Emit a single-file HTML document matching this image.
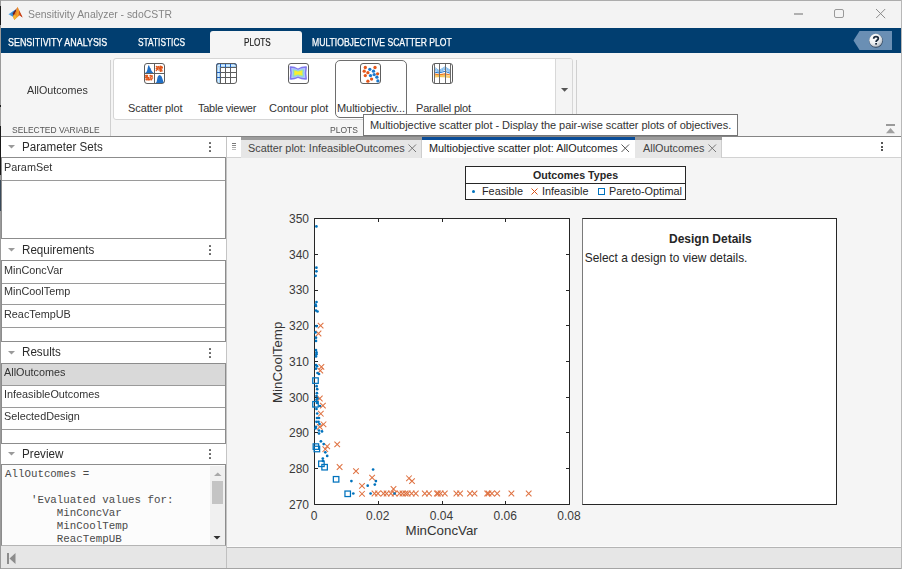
<!DOCTYPE html>
<html><head><meta charset="utf-8">
<style>
*{box-sizing:border-box;margin:0;padding:0}
html,body{width:902px;height:569px;overflow:hidden;background:#f0f0f0;font-family:"Liberation Sans",sans-serif}
.a{position:absolute}
.t{position:absolute;white-space:nowrap;line-height:1}
</style></head><body>
<!-- window frame -->
<div class="a" style="left:0;top:0;width:902px;height:569px;background:#f3f3f3"></div>
<div class="a" style="left:0;top:0;width:902px;height:1px;background:#acacac"></div>
<div class="a" style="left:0;top:0;width:1px;height:569px;background:#9a9a9a"></div>
<div class="a" style="left:901px;top:0;width:1px;height:569px;background:#b8b8b8"></div>
<!-- title bar -->
<svg class="a" style="left:0;top:0" width="30" height="30" viewBox="0 0 30 30">
 <defs><linearGradient id="lgB" x1="0" y1="0" x2="1" y2="0"><stop offset="0" stop-color="#5fb0ec"/><stop offset="1" stop-color="#1c6fc0"/></linearGradient>
 <linearGradient id="lgO" x1="0" y1="0" x2="1" y2="0.3"><stop offset="0" stop-color="#7a1a14"/><stop offset="0.35" stop-color="#e7761e"/><stop offset="0.6" stop-color="#f4a428"/><stop offset="1" stop-color="#c5401a"/></linearGradient></defs>
 <path d="M8.4 14.3 L15.6 9.6 L13.4 16.9 Z" fill="url(#lgB)"/>
 <path d="M12.6 13.6 L16.9 8 L14.6 16.8 Z" fill="#6e1c1a"/>
 <path d="M17.4 6.8 L22.6 17.6 L19.6 15.3 L14.3 19.9 L12.9 15.9 L15.6 12.2 Z" fill="url(#lgO)"/>
 <path d="M17.4 6.8 L22.6 17.6 L19.6 15.3 L18.9 10.5 Z" fill="#c9421b"/>
 <path d="M14.3 19.9 L12.9 15.9 L15.2 14.5 L16.5 17.6 Z" fill="#f2b531"/>
</svg>
<div class="a" style="left:0;top:6px;width:1px;height:19px;background:#1a1a1a"></div>
<div class="a" style="left:0;top:126px;width:1px;height:49px;background:#1a1a1a"></div><div class="a" style="left:0;top:105px;width:1px;height:2px;background:#1a1a1a"></div>
<div class="a" style="left:0;top:180px;width:1px;height:31px;background:#3a4a5a"></div>
<div class="t" style="left:28px;top:9px;font-size:11.5px;color:#858585;transform:scaleX(0.905);transform-origin:0 0">Sensitivity Analyzer - sdoCSTR</div>
<div class="a" style="left:794px;top:13px;width:9px;height:2px;background:#b0b0b0"></div>
<div class="a" style="left:834px;top:9px;width:10px;height:9px;border:1.4px solid #999;border-radius:2px"></div>
<svg class="a" style="left:876px;top:9px" width="10" height="10"><path d="M0 0 L9.2 9.2 M9.2 0 L0 9.2" stroke="#8c8c8c" stroke-width="1"/></svg>
<!-- blue tab bar -->
<div class="a" style="left:1px;top:28px;width:900px;height:25px;background:#013e70"></div>
<div class="t" style="left:8px;top:38px;font-size:10.2px;color:#fff;-webkit-text-stroke:0.25px #fff;transform:scaleX(0.875);transform-origin:0 0">SENSITIVITY ANALYSIS</div>
<div class="t" style="left:138px;top:38px;font-size:10.2px;color:#fff;-webkit-text-stroke:0.25px #fff;transform:scaleX(0.82);transform-origin:0 0">STATISTICS</div>
<div class="a" style="left:210px;top:31px;width:92px;height:22px;background:#f5f5f5;border-radius:3px 3px 0 0"></div>
<div class="t" style="left:244px;top:38px;font-size:10.2px;color:#222;-webkit-text-stroke:0.2px #222;transform:scaleX(0.8);transform-origin:0 0">PLOTS</div>
<div class="t" style="left:312px;top:38px;font-size:10.2px;color:#fff;-webkit-text-stroke:0.25px #fff;transform:scaleX(0.845);transform-origin:0 0">MULTIOBJECTIVE SCATTER PLOT</div>
<svg class="a" style="left:853px;top:31px" width="40" height="20"><defs><radialGradient id="hg" cx="0.35" cy="0.3" r="0.8"><stop offset="0" stop-color="#ffffff"/><stop offset="0.55" stop-color="#eef0f2"/><stop offset="1" stop-color="#a9b2bc"/></radialGradient></defs>
 <path d="M6.5 0 H39 V19 H6.5 L0.5 9.5 Z" fill="#6a8fb4"/>
 <circle cx="23" cy="9.8" r="6.9" fill="#2a3a4e" opacity="0.85"/>
 <circle cx="22.8" cy="9.3" r="6.5" fill="url(#hg)"/>
 <path d="M20.7 7.7 Q20.7 5.6 23 5.6 Q25.3 5.6 25.3 7.5 Q25.3 8.7 24 9.4 Q23.1 9.9 23.1 11" fill="none" stroke="#1c2b3d" stroke-width="1.8"/>
 <rect x="22.2" y="12" width="1.8" height="1.6" fill="#1c2b3d"/></svg>
<!-- toolstrip -->
<div class="a" style="left:1px;top:53px;width:900px;height:83px;background:#f5f5f5"></div>
<div class="t" style="left:26.6px;top:85px;font-size:11px;color:#333;transform:scaleX(0.975);transform-origin:0 0">AllOutcomes</div>
<div class="t" style="left:11.8px;top:124.6px;font-size:9.6px;color:#555;transform:scaleX(0.88);transform-origin:0 0">SELECTED VARIABLE</div>
<div class="a" style="left:110px;top:60px;width:1px;height:76px;background:#d0d0d0"></div>
<div class="a" style="left:113px;top:58px;width:460px;height:62px;background:#fff;border:1px solid #d6d6d6;border-radius:3px"></div>
<div class="a" style="left:556px;top:59px;width:16px;height:60px;background:#f4f4f4;border-radius:0 2px 2px 0"></div>
<div class="a" style="left:555px;top:59px;width:1px;height:60px;background:#d8d8d8"></div>
<svg class="a" style="left:561px;top:88px" width="8" height="5"><path d="M0 0 H7.2 L3.6 3.8 Z" fill="#555"/></svg>
<div class="a" style="left:576px;top:60px;width:1px;height:76px;background:#d0d0d0"></div>
<div class="a" style="left:335px;top:60px;width:72px;height:58px;border:1px solid #6e6e6e;border-radius:5px"></div>
<svg class="a" style="left:144px;top:63px" width="22" height="22" viewBox="0 0 22 22"><rect x="0.5" y="0.5" width="20" height="20" rx="2.5" fill="#fff"/><path d="M1 10 L2.5 9 L3.3 7 L3.8 4.5 L4.3 2.6 L5 2.3 L5.5 3.5 L6 4.8 L6.6 5.2 L7.1 7 L8 8.6 L9.6 10 Z" fill="#1f6fc6"/><circle cx="14.3" cy="3.9" r="0.93" fill="#e0561a"/><circle cx="12.5" cy="5.8" r="0.78" fill="#e0561a"/><circle cx="12.4" cy="5.6" r="0.62" fill="#e0561a"/><circle cx="15.0" cy="3.4" r="0.65" fill="#e0561a"/><circle cx="15.0" cy="7.2" r="0.66" fill="#e0561a"/><circle cx="13.6" cy="6.2" r="1.07" fill="#e0561a"/><circle cx="16.0" cy="5.1" r="1.09" fill="#e0561a"/><circle cx="12.3" cy="7.4" r="0.74" fill="#e0561a"/><circle cx="13.0" cy="3.7" r="0.75" fill="#e0561a"/><circle cx="17.7" cy="4.0" r="0.89" fill="#e0561a"/><circle cx="16.5" cy="5.0" r="0.87" fill="#e0561a"/><circle cx="12.4" cy="3.4" r="0.70" fill="#e0561a"/><circle cx="16.8" cy="5.2" r="0.76" fill="#e0561a"/><circle cx="16.1" cy="5.4" r="0.75" fill="#e0561a"/><circle cx="17.6" cy="6.6" r="0.72" fill="#e0561a"/><circle cx="16.0" cy="5.7" r="1.04" fill="#e0561a"/><circle cx="17.1" cy="4.5" r="1.09" fill="#e0561a"/><circle cx="12.8" cy="5.2" r="0.98" fill="#e0561a"/><circle cx="13.1" cy="5.5" r="0.62" fill="#e0561a"/><circle cx="16.7" cy="6.9" r="0.89" fill="#e0561a"/><circle cx="18.1" cy="4.7" r="0.95" fill="#e0561a"/><circle cx="16.2" cy="6.0" r="0.83" fill="#e0561a"/><circle cx="17.9" cy="7.8" r="0.84" fill="#e0561a"/><circle cx="16.6" cy="3.4" r="0.95" fill="#e0561a"/><circle cx="16.5" cy="8.1" r="1.01" fill="#e0561a"/><circle cx="14.0" cy="5.0" r="0.93" fill="#e0561a"/><circle cx="1.6" cy="14.6" r="0.68" fill="#e0561a"/><circle cx="2.3" cy="12.8" r="0.98" fill="#e0561a"/><circle cx="2.4" cy="13.6" r="0.80" fill="#e0561a"/><circle cx="8.0" cy="12.9" r="0.82" fill="#e0561a"/><circle cx="5.6" cy="16.6" r="1.01" fill="#e0561a"/><circle cx="7.9" cy="13.8" r="0.81" fill="#e0561a"/><circle cx="4.1" cy="16.6" r="1.08" fill="#e0561a"/><circle cx="2.6" cy="13.3" r="0.72" fill="#e0561a"/><circle cx="3.2" cy="14.7" r="0.89" fill="#e0561a"/><circle cx="3.4" cy="12.5" r="0.81" fill="#e0561a"/><circle cx="4.2" cy="15.1" r="1.08" fill="#e0561a"/><circle cx="6.6" cy="14.9" r="0.91" fill="#e0561a"/><circle cx="6.5" cy="12.7" r="1.05" fill="#e0561a"/><circle cx="7.3" cy="16.5" r="1.00" fill="#e0561a"/><circle cx="4.4" cy="14.3" r="0.65" fill="#e0561a"/><circle cx="6.2" cy="12.8" r="0.63" fill="#e0561a"/><circle cx="3.0" cy="13.2" r="0.77" fill="#e0561a"/><circle cx="1.8" cy="12.5" r="0.68" fill="#e0561a"/><circle cx="2.2" cy="14.2" r="0.61" fill="#e0561a"/><circle cx="8.0" cy="15.3" r="0.67" fill="#e0561a"/><circle cx="3.3" cy="14.1" r="0.78" fill="#e0561a"/><circle cx="2.4" cy="16.4" r="1.10" fill="#e0561a"/><circle cx="4.9" cy="14.7" r="0.64" fill="#e0561a"/><circle cx="2.2" cy="14.1" r="0.73" fill="#e0561a"/><circle cx="7.7" cy="13.2" r="0.61" fill="#e0561a"/><circle cx="8.6" cy="14.9" r="0.67" fill="#e0561a"/><path d="M11.5 20 L12.6 19 L13.2 16 L13.6 14 L14.6 12.6 L15.6 12 L16.6 12.6 L17.6 13.4 L18.6 16.2 L19.3 18.4 L20 20 Z" fill="#1f6fc6"/><path d="M10.5 1 V20.5 M0.5 10.5 H20.5" stroke="#5e5e5e" stroke-width="1"/><rect x="0.5" y="0.5" width="20" height="20" rx="2.5" fill="none" stroke="#5e5e5e" stroke-width="1"/></svg><svg class="a" style="left:216px;top:63px" width="22" height="22" viewBox="0 0 22 22"><defs><linearGradient id="thg" x1="0" y1="0" x2="0" y2="1"><stop offset="0" stop-color="#6aaaf0"/><stop offset="0.5" stop-color="#d6f0ff"/><stop offset="1" stop-color="#7ab6f0"/></linearGradient><linearGradient id="tvg" x1="0" y1="0" x2="1" y2="0"><stop offset="0" stop-color="#6aaaf0"/><stop offset="0.5" stop-color="#d6f0ff"/><stop offset="1" stop-color="#7ab6f0"/></linearGradient></defs><rect x="0.5" y="0.5" width="20" height="20" rx="2.5" fill="#fff"/><path d="M0.5 3 Q0.5 0.5 3 0.5 H18 Q20.5 0.5 20.5 3 V4.5 H0.5 Z" fill="url(#thg)"/><path d="M0.5 4.5 H4.5 V20.5 H3 Q0.5 20.5 0.5 18 Z" fill="url(#tvg)"/><path d="M9.5 4.5 V20.5 M14.5 4.5 V20.5 M4.5 9.5 H20.5 M4.5 14.5 H20.5 M4.5 4.5 H20.5 M4.5 4.5 V20.5" stroke="#5e5e5e" stroke-width="1"/><path d="M4.5 0.5 V4.5 M9.5 0.5 V4.5 M14.5 0.5 V4.5 M0.5 9.5 H4.5 M0.5 14.5 H4.5" stroke="#1f5fbf" stroke-width="1"/><path d="M0.5 18 V3 Q0.5 0.5 3 0.5 H18 Q20.5 0.5 20.5 3 V4.5" fill="none" stroke="#1f5fbf" stroke-width="1.1"/><rect x="0.5" y="0.5" width="20" height="20" rx="2.5" fill="none" stroke="#5e5e5e" stroke-width="1"/></svg><svg class="a" style="left:288px;top:63px" width="22" height="22" viewBox="0 0 22 22"><defs><filter id="cblur" x="-20%" y="-20%" width="140%" height="140%"><feGaussianBlur stdDeviation="0.55"/></filter></defs><rect x="0.5" y="0.5" width="20" height="20" rx="2.5" fill="#fff"/><g filter="url(#cblur)"><path d="M1.6 3.4 Q6 3 10 5.5 Q14 3 19 3.4 Q17.6 10 19 16.6 Q14 17 10 15 Q6 17 1.6 16.6 Q3 10 1.6 3.4 Z" fill="#8078ee"/><path d="M3.2 5 Q7 4.6 10 6.8 Q13 4.6 17.4 5 Q16.2 10 17.4 15 Q13 15.4 10 13.6 Q7 15.4 3.2 15 Q4.4 10 3.2 5 Z" fill="#b4c8f8"/><path d="M4.6 6.4 Q8 6.2 10 7.8 Q12 6.2 16 6.4 Q15 10 16 13.6 Q12 13.8 10 12.4 Q8 13.8 4.6 13.6 Q5.6 10 4.6 6.4 Z" fill="#7fd6e0"/><path d="M5.6 7.3 Q8.5 7.1 10 8.4 Q11.5 7.1 15 7.3 Q14.2 10 15 12.6 Q11.5 12.8 10 11.7 Q8.5 12.8 5.6 12.6 Q6.4 10 5.6 7.3 Z" fill="#c8ec70"/><path d="M6.6 8.1 Q9 8 10 9 Q11 8 14 8.1 Q13.4 10 14 11.9 Q11 12 10 11.1 Q9 12 6.6 11.9 Q7.2 10 6.6 8.1 Z" fill="#fbee2e"/></g><rect x="0.5" y="0.5" width="20" height="20" rx="2.5" fill="none" stroke="#5e5e5e" stroke-width="1"/></svg><svg class="a" style="left:360px;top:63px" width="22" height="22" viewBox="0 0 22 22"><rect x="1" y="1" width="20" height="20" rx="2.5" fill="#fff"/><circle cx="5.3" cy="4.5" r="1.65" fill="#e4571b"/><circle cx="15.0" cy="4.5" r="1.65" fill="#e4571b"/><circle cx="4.2" cy="8.2" r="1.65" fill="#e4571b"/><circle cx="7.9" cy="9.7" r="1.65" fill="#e4571b"/><circle cx="5.3" cy="12.6" r="1.65" fill="#e4571b"/><circle cx="17.6" cy="10.8" r="1.65" fill="#e4571b"/><circle cx="11.6" cy="16.1" r="1.65" fill="#e4571b"/><circle cx="7.9" cy="18.2" r="1.65" fill="#e4571b"/><circle cx="9.8" cy="6.3" r="1.65" fill="#1d78cc"/><circle cx="13.5" cy="8.2" r="1.65" fill="#1d78cc"/><circle cx="10.5" cy="12.6" r="1.65" fill="#1d78cc"/><circle cx="14.2" cy="11.6" r="1.65" fill="#1d78cc"/><circle cx="16.9" cy="14.2" r="1.65" fill="#1d78cc"/><circle cx="17.9" cy="17.9" r="1.65" fill="#1d78cc"/><rect x="0.5" y="0.5" width="20" height="20" rx="2.5" fill="none" stroke="#5e5e5e" stroke-width="1"/></svg><svg class="a" style="left:432px;top:63px" width="22" height="22" viewBox="0 0 22 22"><rect x="0.5" y="0.5" width="20" height="20" rx="2.5" fill="#fff"/><path d="M2 4 L7 7.5 L13 3.8 L18.7 7.5 M2 5.5 L7 8.5 L13 5 L18.7 8.5 M2 7 L7 9.3 L13 6.3 L18.7 9.5" stroke="#5aa6e8" stroke-width="0.8" fill="none"/><path d="M2 9 L7 10 L13 8.3 L18.7 10.5" stroke="#1f74cc" stroke-width="1" fill="none"/><path d="M2 10.8 L7 11.8 L13 10.8 L18.7 12" stroke="#ee7a22" stroke-width="1.2" fill="none"/><path d="M2 12.6 L7 12.8 L13 12.6 L18.7 13.4 M2 14 L7 13.6 L13 13.8 L18.7 14.4" stroke="#f4b428" stroke-width="0.9" fill="none"/><path d="M2.5 1 V20 M7.5 1 V20 M13.5 1 V20 M18.5 1 V20" stroke="#6b6b6b" stroke-width="1"/><rect x="0.5" y="0.5" width="20" height="20" rx="2.5" fill="none" stroke="#5e5e5e" stroke-width="1"/></svg>
<div class="t" style="left:128px;top:103px;font-size:11px;color:#333;letter-spacing:-0.1px">Scatter plot</div>
<div class="t" style="left:198px;top:103px;font-size:11px;color:#333;letter-spacing:-0.25px">Table viewer</div>
<div class="t" style="left:269px;top:103px;font-size:11px;color:#333;letter-spacing:-0.05px">Contour plot</div>
<div class="t" style="left:337px;top:103px;font-size:11px;color:#333;letter-spacing:-0.05px">Multiobjectiv...</div>
<div class="t" style="left:416px;top:103px;font-size:11px;color:#333;letter-spacing:-0.2px">Parallel plot</div>
<div class="t" style="left:330px;top:124.5px;font-size:9.8px;color:#555;transform:scaleX(0.87);transform-origin:0 0">PLOTS</div>
<svg class="a" style="left:885px;top:123px" width="11" height="11"><rect x="1" y="1" width="9" height="2" fill="#9a9a9a"/><path d="M1 10.3 L5.5 5 L10 10.3 Z" fill="#a0a0a0"/></svg>
<div class="a" style="left:1px;top:136px;width:900px;height:1px;background:#858585"></div>
<!-- left panel -->
<div class="a" style="left:1px;top:137px;width:225px;height:410px;background:#f0f0f0"></div>
<div class="a" style="left:1px;top:137px;width:225px;height:20px;background:#fff"></div>
<div class="a" style="left:1px;top:157px;width:225px;height:1px;background:#8c8c8c"></div>
<svg class="a" style="left:8px;top:145px" width="8" height="5"><path d="M0 0 H7 L3.5 3.6 Z" fill="#9a9a9a"/></svg>
<div class="t" style="left:22px;top:141.4px;font-size:12.5px;color:#2b2b2b;transform:scaleX(0.93);transform-origin:0 0">Parameter Sets</div>
<div class="a" style="left:209px;top:142.3px;width:2px;height:2px;background:#666;border-radius:0.5px"></div>
<div class="a" style="left:209px;top:146.0px;width:2px;height:2px;background:#666;border-radius:0.5px"></div>
<div class="a" style="left:209px;top:149.6px;width:2px;height:2px;background:#666;border-radius:0.5px"></div>
<div class="a" style="left:1px;top:158px;width:225px;height:81px;background:#fff;border-left:1px solid #8c8c8c;border-right:1px solid #8c8c8c;border-bottom:1px solid #8c8c8c"></div>
<div class="t" style="left:4.3px;top:162.4px;font-size:11px;color:#333;transform:scaleX(0.985);transform-origin:0 0">ParamSet</div>
<div class="a" style="left:2px;top:180px;width:223px;height:1px;background:#9a9a9a"></div>
<div class="a" style="left:1px;top:239px;width:225px;height:21px;background:#fff"></div>
<div class="a" style="left:1px;top:260px;width:225px;height:1px;background:#8c8c8c"></div>
<svg class="a" style="left:8px;top:248px" width="8" height="5"><path d="M0 0 H7 L3.5 3.6 Z" fill="#9a9a9a"/></svg>
<div class="t" style="left:22px;top:244.1px;font-size:12.5px;color:#2b2b2b;transform:scaleX(0.93);transform-origin:0 0">Requirements</div>
<div class="a" style="left:209px;top:245.3px;width:2px;height:2px;background:#666;border-radius:0.5px"></div>
<div class="a" style="left:209px;top:249.0px;width:2px;height:2px;background:#666;border-radius:0.5px"></div>
<div class="a" style="left:209px;top:252.6px;width:2px;height:2px;background:#666;border-radius:0.5px"></div>
<div class="a" style="left:1px;top:261px;width:225px;height:81px;background:#fff;border-left:1px solid #8c8c8c;border-right:1px solid #8c8c8c;border-bottom:1px solid #8c8c8c"></div>
<div class="t" style="left:4.3px;top:265.4px;font-size:11px;color:#333;transform:scaleX(0.985);transform-origin:0 0">MinConcVar</div>
<div class="a" style="left:2px;top:283px;width:223px;height:1px;background:#9a9a9a"></div>
<div class="t" style="left:4.3px;top:286.4px;font-size:11px;color:#333;transform:scaleX(0.985);transform-origin:0 0">MinCoolTemp</div>
<div class="a" style="left:2px;top:304px;width:223px;height:1px;background:#9a9a9a"></div>
<div class="t" style="left:4.3px;top:309.4px;font-size:11px;color:#333;transform:scaleX(0.985);transform-origin:0 0">ReacTempUB</div>
<div class="a" style="left:2px;top:327px;width:223px;height:1px;background:#9a9a9a"></div>
<div class="a" style="left:1px;top:342px;width:225px;height:21px;background:#fff"></div>
<div class="a" style="left:1px;top:363px;width:225px;height:1px;background:#8c8c8c"></div>
<svg class="a" style="left:8px;top:351px" width="8" height="5"><path d="M0 0 H7 L3.5 3.6 Z" fill="#9a9a9a"/></svg>
<div class="t" style="left:22px;top:346.2px;font-size:12.5px;color:#2b2b2b;transform:scaleX(0.93);transform-origin:0 0">Results</div>
<div class="a" style="left:209px;top:348.3px;width:2px;height:2px;background:#666;border-radius:0.5px"></div>
<div class="a" style="left:209px;top:351.9px;width:2px;height:2px;background:#666;border-radius:0.5px"></div>
<div class="a" style="left:209px;top:355.6px;width:2px;height:2px;background:#666;border-radius:0.5px"></div>
<div class="a" style="left:1px;top:364px;width:225px;height:80px;background:#fff;border-left:1px solid #8c8c8c;border-right:1px solid #8c8c8c;border-bottom:1px solid #8c8c8c"></div>
<div class="a" style="left:2px;top:364px;width:223px;height:21px;background:#d9d9d9"></div>
<div class="t" style="left:4.3px;top:367.4px;font-size:11px;color:#333;transform:scaleX(0.985);transform-origin:0 0">AllOutcomes</div>
<div class="a" style="left:2px;top:385px;width:223px;height:1px;background:#9a9a9a"></div>
<div class="t" style="left:4.3px;top:389.4px;font-size:11px;color:#333;transform:scaleX(0.985);transform-origin:0 0">InfeasibleOutcomes</div>
<div class="a" style="left:2px;top:407px;width:223px;height:1px;background:#9a9a9a"></div>
<div class="t" style="left:4.3px;top:411.4px;font-size:11px;color:#333;transform:scaleX(0.985);transform-origin:0 0">SelectedDesign</div>
<div class="a" style="left:2px;top:429px;width:223px;height:1px;background:#9a9a9a"></div>
<div class="a" style="left:1px;top:444px;width:225px;height:20px;background:#fff"></div>
<div class="a" style="left:1px;top:464px;width:225px;height:1px;background:#8c8c8c"></div>
<svg class="a" style="left:8px;top:452px" width="8" height="5"><path d="M0 0 H7 L3.5 3.6 Z" fill="#9a9a9a"/></svg>
<div class="t" style="left:22px;top:448.0px;font-size:12.5px;color:#2b2b2b;transform:scaleX(0.93);transform-origin:0 0">Preview</div>
<div class="a" style="left:209px;top:449.3px;width:2px;height:2px;background:#666;border-radius:0.5px"></div>
<div class="a" style="left:209px;top:452.9px;width:2px;height:2px;background:#666;border-radius:0.5px"></div>
<div class="a" style="left:209px;top:456.6px;width:2px;height:2px;background:#666;border-radius:0.5px"></div>
<div class="a" style="left:1px;top:464px;width:225px;height:82px;background:#fcfcfc;border:1px solid #8c8c8c;border-bottom-color:#b4b4b4"></div>
<div class="a" style="left:210px;top:466px;width:15px;height:79px;background:#f0f0f0"></div>
<div class="a" style="left:212px;top:481px;width:11px;height:23px;background:#c4c4c4"></div>
<svg class="a" style="left:213.5px;top:471.5px" width="8" height="5"><path d="M0 4 H7.5 L3.75 0.4 Z" fill="#a8a8a8"/></svg>
<svg class="a" style="left:213px;top:536px" width="8" height="5"><path d="M0.5 0 H7.5 L4 3.6 Z" fill="#303030"/></svg>
<div class="t" style="left:5px;top:469.2px;font-family:'Liberation Mono',monospace;font-size:10.8px;color:#4a4a4a;white-space:pre">AllOutcomes =</div>
<div class="t" style="left:5px;top:494.9px;font-family:'Liberation Mono',monospace;font-size:10.8px;color:#4a4a4a;white-space:pre">    'Evaluated values for:</div>
<div class="t" style="left:5px;top:507.8px;font-family:'Liberation Mono',monospace;font-size:10.8px;color:#4a4a4a;white-space:pre">        MinConcVar</div>
<div class="t" style="left:5px;top:520.6px;font-family:'Liberation Mono',monospace;font-size:10.8px;color:#4a4a4a;white-space:pre">        MinCoolTemp</div>
<div class="t" style="left:5px;top:533.5px;font-family:'Liberation Mono',monospace;font-size:10.8px;color:#4a4a4a;white-space:pre">        ReacTempUB</div>
<!-- doc tab bar -->
<div class="a" style="left:226px;top:137px;width:675px;height:21px;background:#fff"></div>
<div class="a" style="left:226px;top:157px;width:675px;height:1px;background:#d2d2d2"></div>
<div class="a" style="left:226px;top:137px;width:1px;height:410px;background:#c4c4c4"></div>
<div class="a" style="left:232px;top:143px;width:4px;height:1px;background:#777"></div>
<div class="a" style="left:232px;top:145px;width:4px;height:1px;background:#888"></div>
<div class="a" style="left:232px;top:147px;width:4px;height:1px;background:#aaa"></div>
<div class="a" style="left:232px;top:149px;width:4px;height:1px;background:#bbb"></div>
<div class="a" style="left:241px;top:137px;width:181px;height:21px;background:#e6e6e6;border-right:1px solid #cdcdcd"></div>
<div class="a" style="left:241px;top:137px;width:181px;height:3px;background:#9c9c9c"></div>
<div class="t" style="left:248px;top:143px;font-size:10.85px;color:#444">Scatter plot: InfeasibleOutcomes</div>
<svg class="a" style="left:408px;top:144px" width="9" height="9"><path d="M0.5 0.5 L8 8 M8 0.5 L0.5 8" stroke="#777" stroke-width="1"/></svg>
<div class="a" style="left:422px;top:137px;width:213px;height:21px;background:#fff"></div>
<div class="a" style="left:422px;top:137px;width:213px;height:3px;background:#0a4d99"></div>
<div class="t" style="left:429px;top:143px;font-size:10.85px;color:#222">Multiobjective scatter plot: AllOutcomes</div>
<svg class="a" style="left:621px;top:144px" width="9" height="9"><path d="M0.5 0.5 L8 8 M8 0.5 L0.5 8" stroke="#555" stroke-width="1"/></svg>
<div class="a" style="left:635px;top:137px;width:87px;height:21px;background:#e6e6e6;border-right:1px solid #cdcdcd"></div>
<div class="a" style="left:635px;top:137px;width:87px;height:3px;background:#9c9c9c"></div>
<div class="t" style="left:643px;top:143px;font-size:10.85px;color:#444">AllOutcomes</div>
<svg class="a" style="left:708px;top:144px" width="9" height="9"><path d="M0.5 0.5 L8 8 M8 0.5 L0.5 8" stroke="#777" stroke-width="1"/></svg>
<div class="a" style="left:881px;top:142.2px;width:2px;height:2px;background:#555"></div>
<div class="a" style="left:881px;top:145.8px;width:2px;height:2px;background:#555"></div>
<div class="a" style="left:881px;top:149.4px;width:2px;height:2px;background:#555"></div>
<!-- doc area -->
<div class="a" style="left:227px;top:158px;width:674px;height:389px;background:#f5f5f5"></div>
<!-- legend -->
<div class="a" style="left:465px;top:166px;width:221px;height:34px;background:#fff;border:1px solid #262626"></div>
<div class="a" style="left:466px;top:183px;width:219px;height:1px;background:#262626"></div>
<div class="t" style="left:533px;top:170px;font-size:10.67px;font-weight:700;color:#262626">Outcomes Types</div>
<div class="a" style="left:472.3px;top:189.8px;width:3px;height:3px;border-radius:50%;background:#0072bd"></div>
<div class="t" style="left:482px;top:186px;font-size:10.85px;color:#262626">Feasible</div>
<svg class="a" style="left:531px;top:188px" width="7" height="7"><path d="M0.5 0.5 L6.5 6.5 M6.5 0.5 L0.5 6.5" stroke="#d95319" stroke-width="1"/></svg>
<div class="t" style="left:542px;top:186px;font-size:10.85px;color:#262626">Infeasible</div>
<div class="a" style="left:598px;top:188px;width:7px;height:7px;border:1.3px solid #0072bd"></div>
<div class="t" style="left:609px;top:186px;font-size:10.85px;color:#262626">Pareto-Optimal</div>
<!-- design panel -->
<div class="a" style="left:582px;top:218px;width:255px;height:287px;background:#fff;border:1px solid #262626;border-left-color:#7a7a7a"></div>
<div class="t" style="left:669px;top:233.2px;font-size:12px;font-weight:700;color:#262626">Design Details</div>
<div class="t" style="left:584.8px;top:253px;font-size:11.9px;color:#262626">Select a design to view details.</div>
<svg class="a" style="left:0;top:0" width="902" height="569">
<rect x="314" y="218" width="256" height="287" fill="#fff"/>
<path d="M314.5 218.5 H569.5 V504.5 H314.5 Z" fill="none" stroke="#262626" stroke-width="1"/>
<path d="M314.5 218.5 H318 M569.5 218.5 H566 M314.5 254.5 H318 M569.5 254.5 H566 M314.5 290.5 H318 M569.5 290.5 H566 M314.5 325.5 H318 M569.5 325.5 H566 M314.5 361.5 H318 M569.5 361.5 H566 M314.5 397.5 H318 M569.5 397.5 H566 M314.5 432.5 H318 M569.5 432.5 H566 M314.5 468.5 H318 M569.5 468.5 H566 M314.5 504.5 H318 M569.5 504.5 H566 M314.5 504.5 V501 M314.5 218.5 V222 M378.5 504.5 V501 M378.5 218.5 V222 M442.5 504.5 V501 M442.5 218.5 V222 M505.5 504.5 V501 M505.5 218.5 V222 M569.5 504.5 V501 M569.5 218.5 V222 " stroke="#262626" stroke-width="1" fill="none"/>
<path d="M317.80 322.80 L323.40 328.40 M323.40 322.80 L317.80 328.40" stroke="#df7343" stroke-width="1.05"/>
<path d="M315.70 330.70 L321.30 336.30 M321.30 330.70 L315.70 336.30" stroke="#df7343" stroke-width="1.05"/>
<path d="M318.60 364.10 L324.20 369.70 M324.20 364.10 L318.60 369.70" stroke="#df7343" stroke-width="1.05"/>
<path d="M317.50 367.80 L323.10 373.40 M323.10 367.80 L317.50 373.40" stroke="#df7343" stroke-width="1.05"/>
<path d="M317.00 395.70 L322.60 401.30 M322.60 395.70 L317.00 401.30" stroke="#df7343" stroke-width="1.05"/>
<path d="M320.10 402.80 L325.70 408.40 M325.70 402.80 L320.10 408.40" stroke="#df7343" stroke-width="1.05"/>
<path d="M318.00 410.90 L323.60 416.50 M323.60 410.90 L318.00 416.50" stroke="#df7343" stroke-width="1.05"/>
<path d="M320.70 421.50 L326.30 427.10 M326.30 421.50 L320.70 427.10" stroke="#df7343" stroke-width="1.05"/>
<path d="M317.00 424.10 L322.60 429.70 M322.60 424.10 L317.00 429.70" stroke="#df7343" stroke-width="1.05"/>
<path d="M324.40 443.50 L330.00 449.10 M330.00 443.50 L324.40 449.10" stroke="#df7343" stroke-width="1.05"/>
<path d="M322.50 446.40 L328.10 452.00 M328.10 446.40 L322.50 452.00" stroke="#df7343" stroke-width="1.05"/>
<path d="M334.40 441.60 L340.00 447.20 M340.00 441.60 L334.40 447.20" stroke="#df7343" stroke-width="1.05"/>
<path d="M336.80 464.20 L342.40 469.80 M342.40 464.20 L336.80 469.80" stroke="#df7343" stroke-width="1.05"/>
<path d="M353.20 468.30 L358.80 473.90 M358.80 468.30 L353.20 473.90" stroke="#df7343" stroke-width="1.05"/>
<path d="M359.20 483.10 L364.80 488.70 M364.80 483.10 L359.20 488.70" stroke="#df7343" stroke-width="1.05"/>
<path d="M359.20 491.00 L364.80 496.60 M364.80 491.00 L359.20 496.60" stroke="#df7343" stroke-width="1.05"/>
<path d="M369.30 474.80 L374.90 480.40 M374.90 474.80 L369.30 480.40" stroke="#df7343" stroke-width="1.05"/>
<path d="M390.70 486.20 L396.30 491.80 M396.30 486.20 L390.70 491.80" stroke="#df7343" stroke-width="1.05"/>
<path d="M406.20 475.50 L411.80 481.10 M411.80 475.50 L406.20 481.10" stroke="#df7343" stroke-width="1.05"/>
<path d="M409.20 478.30 L414.80 483.90 M414.80 478.30 L409.20 483.90" stroke="#df7343" stroke-width="1.05"/>
<path d="M371.70 490.70 L377.30 496.30 M377.30 490.70 L371.70 496.30" stroke="#df7343" stroke-width="1.05"/>
<path d="M375.20 490.70 L380.80 496.30 M380.80 490.70 L375.20 496.30" stroke="#df7343" stroke-width="1.05"/>
<path d="M380.70 490.70 L386.30 496.30 M386.30 490.70 L380.70 496.30" stroke="#df7343" stroke-width="1.05"/>
<path d="M383.80 490.70 L389.40 496.30 M389.40 490.70 L383.80 496.30" stroke="#df7343" stroke-width="1.05"/>
<path d="M388.10 490.70 L393.70 496.30 M393.70 490.70 L388.10 496.30" stroke="#df7343" stroke-width="1.05"/>
<path d="M391.80 490.70 L397.40 496.30 M397.40 490.70 L391.80 496.30" stroke="#df7343" stroke-width="1.05"/>
<path d="M396.70 490.70 L402.30 496.30 M402.30 490.70 L396.70 496.30" stroke="#df7343" stroke-width="1.05"/>
<path d="M399.70 490.70 L405.30 496.30 M405.30 490.70 L399.70 496.30" stroke="#df7343" stroke-width="1.05"/>
<path d="M402.70 490.70 L408.30 496.30 M408.30 490.70 L402.70 496.30" stroke="#df7343" stroke-width="1.05"/>
<path d="M404.90 490.70 L410.50 496.30 M410.50 490.70 L404.90 496.30" stroke="#df7343" stroke-width="1.05"/>
<path d="M408.80 490.70 L414.40 496.30 M414.40 490.70 L408.80 496.30" stroke="#df7343" stroke-width="1.05"/>
<path d="M413.00 490.70 L418.60 496.30 M418.60 490.70 L413.00 496.30" stroke="#df7343" stroke-width="1.05"/>
<path d="M422.00 490.70 L427.60 496.30 M427.60 490.70 L422.00 496.30" stroke="#df7343" stroke-width="1.05"/>
<path d="M426.20 490.70 L431.80 496.30 M431.80 490.70 L426.20 496.30" stroke="#df7343" stroke-width="1.05"/>
<path d="M434.10 490.70 L439.70 496.30 M439.70 490.70 L434.10 496.30" stroke="#df7343" stroke-width="1.05"/>
<path d="M435.20 490.70 L440.80 496.30 M440.80 490.70 L435.20 496.30" stroke="#df7343" stroke-width="1.05"/>
<path d="M437.80 490.70 L443.40 496.30 M443.40 490.70 L437.80 496.30" stroke="#df7343" stroke-width="1.05"/>
<path d="M442.00 490.70 L447.60 496.30 M447.60 490.70 L442.00 496.30" stroke="#df7343" stroke-width="1.05"/>
<path d="M453.60 490.70 L459.20 496.30 M459.20 490.70 L453.60 496.30" stroke="#df7343" stroke-width="1.05"/>
<path d="M457.30 490.70 L462.90 496.30 M462.90 490.70 L457.30 496.30" stroke="#df7343" stroke-width="1.05"/>
<path d="M467.20 490.70 L472.80 496.30 M472.80 490.70 L467.20 496.30" stroke="#df7343" stroke-width="1.05"/>
<path d="M471.70 490.70 L477.30 496.30 M477.30 490.70 L471.70 496.30" stroke="#df7343" stroke-width="1.05"/>
<path d="M484.40 490.70 L490.00 496.30 M490.00 490.70 L484.40 496.30" stroke="#df7343" stroke-width="1.05"/>
<path d="M485.70 490.70 L491.30 496.30 M491.30 490.70 L485.70 496.30" stroke="#df7343" stroke-width="1.05"/>
<path d="M489.10 490.70 L494.70 496.30 M494.70 490.70 L489.10 496.30" stroke="#df7343" stroke-width="1.05"/>
<path d="M494.40 490.70 L500.00 496.30 M500.00 490.70 L494.40 496.30" stroke="#df7343" stroke-width="1.05"/>
<path d="M508.60 490.70 L514.20 496.30 M514.20 490.70 L508.60 496.30" stroke="#df7343" stroke-width="1.05"/>
<path d="M525.90 490.70 L531.50 496.30 M531.50 490.70 L525.90 496.30" stroke="#df7343" stroke-width="1.05"/>
<circle cx="316.4" cy="226.4" r="1.35" fill="#0072bd"/>
<circle cx="316.4" cy="267.7" r="1.35" fill="#0072bd"/>
<circle cx="316.4" cy="271.3" r="1.35" fill="#0072bd"/>
<circle cx="315.6" cy="275.8" r="1.35" fill="#0072bd"/>
<circle cx="316.5" cy="302" r="1.35" fill="#0072bd"/>
<circle cx="315.6" cy="304.5" r="1.35" fill="#0072bd"/>
<circle cx="316" cy="306" r="1.35" fill="#0072bd"/>
<circle cx="316" cy="310.5" r="1.35" fill="#0072bd"/>
<circle cx="317.5" cy="311.5" r="1.35" fill="#0072bd"/>
<circle cx="316.5" cy="326.2" r="1.35" fill="#0072bd"/>
<circle cx="315.5" cy="332.4" r="1.35" fill="#0072bd"/>
<circle cx="316" cy="337.7" r="1.35" fill="#0072bd"/>
<circle cx="316" cy="340.9" r="1.35" fill="#0072bd"/>
<circle cx="316" cy="350" r="1.35" fill="#0072bd"/>
<circle cx="316.5" cy="352.4" r="1.35" fill="#0072bd"/>
<circle cx="316.5" cy="354.2" r="1.35" fill="#0072bd"/>
<circle cx="316" cy="356.4" r="1.35" fill="#0072bd"/>
<circle cx="316" cy="365" r="1.35" fill="#0072bd"/>
<circle cx="317" cy="366.2" r="1.35" fill="#0072bd"/>
<circle cx="316" cy="368.7" r="1.35" fill="#0072bd"/>
<circle cx="317.5" cy="373" r="1.35" fill="#0072bd"/>
<circle cx="319" cy="374" r="1.35" fill="#0072bd"/>
<circle cx="316.6" cy="386.2" r="1.35" fill="#0072bd"/>
<circle cx="317.2" cy="389.2" r="1.35" fill="#0072bd"/>
<circle cx="316.9" cy="393.2" r="1.35" fill="#0072bd"/>
<circle cx="316.5" cy="396" r="1.35" fill="#0072bd"/>
<circle cx="317.5" cy="398.5" r="1.35" fill="#0072bd"/>
<circle cx="316.5" cy="399.7" r="1.35" fill="#0072bd"/>
<circle cx="317" cy="403" r="1.35" fill="#0072bd"/>
<circle cx="320" cy="406" r="1.35" fill="#0072bd"/>
<circle cx="316.5" cy="408.9" r="1.35" fill="#0072bd"/>
<circle cx="317.2" cy="413.5" r="1.35" fill="#0072bd"/>
<circle cx="317" cy="418" r="1.35" fill="#0072bd"/>
<circle cx="319" cy="418" r="1.35" fill="#0072bd"/>
<circle cx="316.5" cy="421.8" r="1.35" fill="#0072bd"/>
<circle cx="318.5" cy="421.8" r="1.35" fill="#0072bd"/>
<circle cx="319.5" cy="424" r="1.35" fill="#0072bd"/>
<circle cx="316" cy="426.8" r="1.35" fill="#0072bd"/>
<circle cx="315.5" cy="428.3" r="1.35" fill="#0072bd"/>
<circle cx="319" cy="430.5" r="1.35" fill="#0072bd"/>
<circle cx="322" cy="431.4" r="1.35" fill="#0072bd"/>
<circle cx="319" cy="433.5" r="1.35" fill="#0072bd"/>
<circle cx="320.9" cy="441.3" r="1.35" fill="#0072bd"/>
<circle cx="323.7" cy="444.1" r="1.35" fill="#0072bd"/>
<circle cx="325.3" cy="452.3" r="1.35" fill="#0072bd"/>
<circle cx="327.2" cy="455.9" r="1.35" fill="#0072bd"/>
<circle cx="322.8" cy="458.6" r="1.35" fill="#0072bd"/>
<circle cx="322.9" cy="461" r="1.35" fill="#0072bd"/>
<circle cx="351.4" cy="481.1" r="1.35" fill="#0072bd"/>
<circle cx="353.3" cy="493.5" r="1.35" fill="#0072bd"/>
<circle cx="373.1" cy="469.5" r="1.35" fill="#0072bd"/>
<circle cx="375.9" cy="481.1" r="1.35" fill="#0072bd"/>
<circle cx="374.8" cy="484.6" r="1.35" fill="#0072bd"/>
<circle cx="367.7" cy="485.7" r="1.35" fill="#0072bd"/>
<circle cx="370.6" cy="493.5" r="1.35" fill="#0072bd"/>
<circle cx="394.6" cy="493.5" r="1.35" fill="#0072bd"/>
<rect x="312.75" y="377.85" width="5.5" height="5.5" fill="none" stroke="#0072bd" stroke-width="1.25"/>
<rect x="312.75" y="401.55" width="5.5" height="5.5" fill="none" stroke="#0072bd" stroke-width="1.25"/>
<rect x="313.15" y="443.85" width="5.5" height="5.5" fill="none" stroke="#0072bd" stroke-width="1.25"/>
<rect x="314.15" y="446.25" width="5.5" height="5.5" fill="none" stroke="#0072bd" stroke-width="1.25"/>
<rect x="318.65" y="461.05" width="5.5" height="5.5" fill="none" stroke="#0072bd" stroke-width="1.25"/>
<rect x="321.85" y="464.45" width="5.5" height="5.5" fill="none" stroke="#0072bd" stroke-width="1.25"/>
<rect x="333.35" y="476.55" width="5.5" height="5.5" fill="none" stroke="#0072bd" stroke-width="1.25"/>
<rect x="344.95" y="491.05" width="5.5" height="5.5" fill="none" stroke="#0072bd" stroke-width="1.25"/>
</svg>
<div class="t" style="left:270px;width:39px;text-align:right;top:212.8px;font-size:12px;color:#3a3a3a">350</div>
<div class="t" style="left:270px;width:39px;text-align:right;top:248.6px;font-size:12px;color:#3a3a3a">340</div>
<div class="t" style="left:270px;width:39px;text-align:right;top:284.3px;font-size:12px;color:#3a3a3a">330</div>
<div class="t" style="left:270px;width:39px;text-align:right;top:320.1px;font-size:12px;color:#3a3a3a">320</div>
<div class="t" style="left:270px;width:39px;text-align:right;top:355.8px;font-size:12px;color:#3a3a3a">310</div>
<div class="t" style="left:270px;width:39px;text-align:right;top:391.6px;font-size:12px;color:#3a3a3a">300</div>
<div class="t" style="left:270px;width:39px;text-align:right;top:427.3px;font-size:12px;color:#3a3a3a">290</div>
<div class="t" style="left:270px;width:39px;text-align:right;top:463.1px;font-size:12px;color:#3a3a3a">280</div>
<div class="t" style="left:270px;width:39px;text-align:right;top:498.8px;font-size:12px;color:#3a3a3a">270</div>
<div class="t" style="left:284.0px;width:60px;text-align:center;top:509.5px;font-size:12px;color:#3a3a3a">0</div>
<div class="t" style="left:347.8px;width:60px;text-align:center;top:509.5px;font-size:12px;color:#3a3a3a">0.02</div>
<div class="t" style="left:411.5px;width:60px;text-align:center;top:509.5px;font-size:12px;color:#3a3a3a">0.04</div>
<div class="t" style="left:475.2px;width:60px;text-align:center;top:509.5px;font-size:12px;color:#3a3a3a">0.06</div>
<div class="t" style="left:539.0px;width:60px;text-align:center;top:509.5px;font-size:12px;color:#3a3a3a">0.08</div>
<div class="t" style="left:405.6px;top:524px;font-size:13.3px;color:#333">MinConcVar</div>
<div class="t" style="left:271px;top:402.5px;font-size:13.3px;color:#333;transform:rotate(-90deg);transform-origin:0 0">MinCoolTemp</div>
<!-- status bar -->
<div class="a" style="left:1px;top:546px;width:225px;height:22px;background:#e6e6e6"></div>
<div class="a" style="left:227px;top:546px;width:674px;height:1px;background:#fbfbfb"></div>
<div class="a" style="left:227px;top:547px;width:674px;height:1px;background:#b4b4b4"></div>
<div class="a" style="left:227px;top:548px;width:674px;height:20px;background:#e6e6e6"></div>
<div class="a" style="left:226px;top:546px;width:1px;height:22px;background:#c0c0c0"></div>
<div class="a" style="left:1px;top:568px;width:900px;height:1px;background:#a4a4a4"></div>
<svg class="a" style="left:7px;top:553px" width="10" height="11"><rect x="0" y="0" width="2" height="11" fill="#8c8c8c"/><path d="M2.5 5.5 L8.5 0 V11 Z" fill="#8c8c8c"/></svg>
<!-- tooltip -->
<div class="a" style="left:363px;top:114px;width:375px;height:22px;background:#fff;border:1px solid #767676"></div>
<div class="t" style="left:370px;top:120px;font-size:11px;color:#333;letter-spacing:-0.04px">Multiobjective scatter plot - Display the pair-wise scatter plots of objectives.</div>
</body></html>
